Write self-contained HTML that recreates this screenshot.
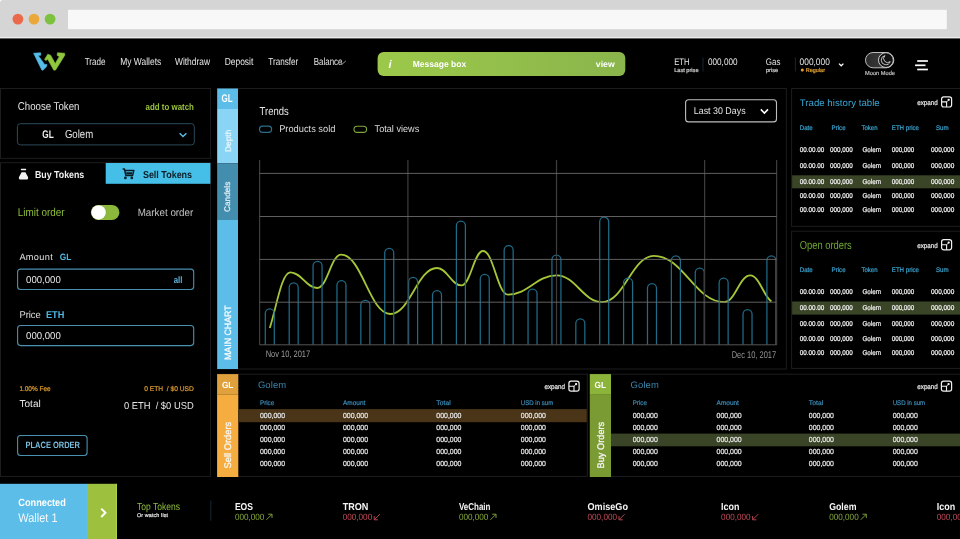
<!DOCTYPE html>
<html><head><meta charset="utf-8"><title>Wallet Dashboard</title>
<style>
html,body{margin:0;padding:0;background:#000;width:960px;height:539px;overflow:hidden}
svg{display:block;position:absolute;left:0;top:0;will-change:transform;text-rendering:geometricPrecision}
svg text{font-family:"Liberation Sans",sans-serif}
</style></head>
<body>
<svg width="960" height="539" viewBox="0 0 960 539">
<rect x="0" y="0" width="960" height="38" fill="#d5d5d5"/>
<path d="M0 0 H3 A3 3 0 0 0 0 3 Z" fill="#fff"/>
<rect x="0.00" y="37.20" width="960.00" height="1.20" rx="0" fill="#f2f2f2" />
<rect x="68.00" y="9.80" width="878.80" height="19.40" rx="0" fill="#f8f8f8" />
<circle cx="17.9" cy="19.1" r="5.4" fill="#e9694a"/>
<circle cx="34" cy="19.1" r="5.4" fill="#eaa83a"/>
<circle cx="50.1" cy="19.1" r="5.4" fill="#7dc23f"/>
<g fill="none" stroke-linejoin="round"><path d="M33.6 53.2 L40.6 52.8 L40.8 55.2 L38.2 55.4 L44.6 64.4 L46.8 64.3 L46.6 66.6 L43 70.2 L41.8 70 Z" fill="#55bde9" stroke="#55bde9" stroke-width="0.6"/><path d="M44.6 59.4 L47.8 54.2 L50.6 55.2 L55.2 63.6 L59.4 56.4 L57.2 55.6 L57.4 52.8 L64.6 53.2 L64.8 55.2 L55.6 70 L53.8 70.2 L47.6 59 L46.2 60.6 Z" fill="#8fc73e" stroke="#8fc73e" stroke-width="0.6"/></g>
<text x="84.70" y="65.40" font-size="10.32" fill="#e8e8e8" textLength="20.80" lengthAdjust="spacingAndGlyphs" text-anchor="start" >Trade</text>
<text x="120.30" y="65.40" font-size="10.32" fill="#e8e8e8" textLength="40.90" lengthAdjust="spacingAndGlyphs" text-anchor="start" >My Wallets</text>
<text x="175.00" y="65.40" font-size="10.32" fill="#e8e8e8" textLength="35.00" lengthAdjust="spacingAndGlyphs" text-anchor="start" >Withdraw</text>
<text x="224.70" y="65.40" font-size="10.32" fill="#e8e8e8" textLength="28.60" lengthAdjust="spacingAndGlyphs" text-anchor="start" >Deposit</text>
<text x="268.30" y="65.40" font-size="10.32" fill="#e8e8e8" textLength="30.00" lengthAdjust="spacingAndGlyphs" text-anchor="start" >Transfer</text>
<text x="313.70" y="65.40" font-size="10.32" fill="#e8e8e8" textLength="28.80" lengthAdjust="spacingAndGlyphs" text-anchor="start" >Balance</text>
<path d="M340.9 63.2 L341.9 64.3 L345.8 61" stroke="#bbb" stroke-width="0.8" fill="none"/>
<defs><linearGradient id="mg" x1="0" x2="1" y1="0" y2="0"><stop offset="0" stop-color="#9cc94a"/><stop offset="1" stop-color="#8ab54c"/></linearGradient></defs>
<rect x="377.60" y="52.00" width="247.70" height="24.00" rx="6" fill="url(#mg)" />
<text x="388.60" y="67.60" font-size="11.00" fill="#fff" font-weight="bold" text-anchor="start" font-style="italic">i</text>
<text x="412.70" y="67.40" font-size="8.72" fill="#fff" font-weight="bold" textLength="53.50" lengthAdjust="spacingAndGlyphs" text-anchor="start" >Message box</text>
<text x="595.80" y="67.40" font-size="8.70" fill="#fff" font-weight="bold" textLength="18.90" lengthAdjust="spacing" text-anchor="start" >view</text>
<text x="674.20" y="64.80" font-size="9.59" fill="#e6e6e6" textLength="15.40" lengthAdjust="spacingAndGlyphs" text-anchor="start" >ETH</text>
<text x="674.20" y="72.00" font-size="5.60" fill="#cfcfcf" textLength="24.30" lengthAdjust="spacing" stroke="#cfcfcf" stroke-width="0.22" text-anchor="start" >Last prise</text>
<line x1="703.00" y1="57.50" x2="703.00" y2="71.50" stroke="#13212a" stroke-width="1.2" />
<text x="708.00" y="64.80" font-size="9.59" fill="#e6e6e6" textLength="29.50" lengthAdjust="spacingAndGlyphs" text-anchor="start" >000,000</text>
<text x="765.80" y="64.80" font-size="9.59" fill="#e6e6e6" textLength="14.60" lengthAdjust="spacingAndGlyphs" text-anchor="start" >Gas</text>
<text x="766.00" y="72.00" font-size="5.60" fill="#cfcfcf" textLength="12.00" lengthAdjust="spacingAndGlyphs" stroke="#cfcfcf" stroke-width="0.22" text-anchor="start" >prise</text>
<line x1="795.40" y1="57.50" x2="795.40" y2="71.50" stroke="#13212a" stroke-width="1.2" />
<text x="799.60" y="64.80" font-size="9.59" fill="#e6e6e6" textLength="30.20" lengthAdjust="spacingAndGlyphs" text-anchor="start" >000,000</text>
<circle cx="802.3" cy="70" r="1.5" fill="#e8a33a"/>
<text x="805.80" y="72.00" font-size="5.60" fill="#e0a030" textLength="19.20" lengthAdjust="spacingAndGlyphs" stroke="#e0a030" stroke-width="0.22" text-anchor="start" >Regular</text>
<path d="M839 63.6 L841.2 65.8 L843.4 63.6" stroke="#fff" stroke-width="1.3" fill="none"/>
<defs><linearGradient id="tg" x1="0" x2="1"><stop offset="0" stop-color="#2a2a2a"/><stop offset="1" stop-color="#444"/></linearGradient></defs>
<rect x="865.50" y="52.50" width="28.30" height="15.30" rx="7.6" fill="url(#tg)" stroke="#bdbdbd" stroke-width="1" />
<circle cx="885.9" cy="60.1" r="7.4" fill="#111" stroke="#cfcfcf" stroke-width="1"/>
<path d="M885 55.6 A4.6 4.6 0 1 0 890.2 61.6 A3.6 3.6 0 0 1 885 55.6 Z" fill="none" stroke="#d0d0d0" stroke-width="0.9"/>
<text x="865.00" y="75.20" font-size="5.80" fill="#bdbdbd" textLength="30.00" lengthAdjust="spacingAndGlyphs" stroke="#bdbdbd" stroke-width="0.22" text-anchor="start" >Moon Mode</text>
<line x1="917.20" y1="61.00" x2="927.90" y2="61.00" stroke="#fff" stroke-width="1.7" />
<line x1="915.10" y1="65.30" x2="925.50" y2="65.30" stroke="#fff" stroke-width="1.7" />
<line x1="917.20" y1="69.50" x2="927.90" y2="69.50" stroke="#fff" stroke-width="1.7" />
<rect x="0.50" y="88.50" width="210.10" height="69.80" rx="0" fill="#000" stroke="#1d1d1d" stroke-width="1" />
<text x="17.80" y="109.60" font-size="11.34" fill="#e2e2e2" textLength="61.60" lengthAdjust="spacingAndGlyphs" text-anchor="start" >Choose Token</text>
<text x="145.60" y="109.60" font-size="9.40" fill="#98c13c" font-weight="bold" textLength="48.30" lengthAdjust="spacingAndGlyphs" text-anchor="start" >add to watch</text>
<rect x="17.40" y="123.70" width="176.90" height="21.20" rx="3" fill="#000" stroke="#2c4a5a" stroke-width="1" />
<text x="42.30" y="137.50" font-size="11.05" fill="#f0f0f0" font-weight="bold" textLength="11.40" lengthAdjust="spacingAndGlyphs" text-anchor="start" >GL</text>
<text x="64.90" y="137.50" font-size="11.63" fill="#e6e6e6" textLength="28.30" lengthAdjust="spacingAndGlyphs" text-anchor="start" >Golem</text>
<path d="M179.6 133.3 L183 136.6 L186.4 133.3" stroke="#5bbde8" stroke-width="1.4" fill="none"/>
<rect x="0.50" y="162.70" width="210.10" height="313.70" rx="0" fill="#000" stroke="#1d1d1d" stroke-width="1" />
<rect x="105.70" y="163.00" width="104.70" height="20.80" rx="0" fill="#45bfe8" />
<rect x="20.8" y="168.8" width="5.4" height="1.4" rx="0.6" fill="#f2f2f2"/><path d="M21.6 172.3 H25.4 L28 177 Q28.6 179.6 26.2 179.6 H20.8 Q18.4 179.6 19 177 Z" fill="#f2f2f2"/>
<text x="34.90" y="177.90" font-size="10.03" fill="#f0f0f0" font-weight="bold" textLength="49.40" lengthAdjust="spacingAndGlyphs" text-anchor="start" >Buy Tokens</text>
<g fill="none" stroke="#0b1c24" stroke-width="1.5" stroke-linejoin="round"><path d="M122.6 168.9 H124.4 L125.8 175.4 H132.6 L133.8 170.6 H125"/></g><path d="M126 172.2 H132.4 L131.8 174.4 H126.5 Z" fill="#0b1c24"/><circle cx="125.4" cy="177.9" r="1.35" fill="#0b1c24"/><circle cx="131.8" cy="177.9" r="1.35" fill="#0b1c24"/>
<text x="142.90" y="177.90" font-size="10.03" fill="#0c1d25" font-weight="bold" textLength="49.20" lengthAdjust="spacingAndGlyphs" text-anchor="start" >Sell Tokens</text>
<text x="17.80" y="216.00" font-size="11.34" fill="#8fbd3c" textLength="46.80" lengthAdjust="spacingAndGlyphs" text-anchor="start" >Limit order</text>
<rect x="90.90" y="204.90" width="28.50" height="15.10" rx="7.5" fill="#8cb83c" />
<circle cx="99.2" cy="212.45" r="7.2" fill="#6f9a2c" opacity="0.6"/><circle cx="98.6" cy="212.45" r="7.25" fill="#fff"/>
<text x="137.70" y="216.00" font-size="10.61" fill="#c2c2c2" textLength="55.60" lengthAdjust="spacingAndGlyphs" text-anchor="start" >Market order</text>
<text x="19.40" y="260.40" font-size="9.16" fill="#e2e2e2" textLength="33.30" lengthAdjust="spacing" text-anchor="start" >Amount</text>
<text x="59.80" y="260.40" font-size="9.16" fill="#4db8e6" font-weight="bold" textLength="11.60" lengthAdjust="spacingAndGlyphs" text-anchor="start" >GL</text>
<rect x="17.60" y="269.10" width="176.10" height="20.40" rx="3" fill="#000" stroke="#4a90b0" stroke-width="1.1" />
<text x="26.10" y="282.80" font-size="10.03" fill="#e8e8e8" textLength="34.70" lengthAdjust="spacingAndGlyphs" text-anchor="start" >000,000</text>
<text x="173.70" y="282.80" font-size="9.40" fill="#5bb6e0" font-weight="bold" textLength="8.70" lengthAdjust="spacingAndGlyphs" text-anchor="start" >all</text>
<text x="19.40" y="318.00" font-size="9.88" fill="#e2e2e2" textLength="21.40" lengthAdjust="spacingAndGlyphs" text-anchor="start" >Price</text>
<text x="45.90" y="318.00" font-size="9.88" fill="#4db8e6" font-weight="bold" textLength="18.40" lengthAdjust="spacingAndGlyphs" text-anchor="start" >ETH</text>
<rect x="17.60" y="325.50" width="176.10" height="20.10" rx="3" fill="#000" stroke="#4a90b0" stroke-width="1.1" />
<text x="26.10" y="338.80" font-size="10.03" fill="#e8e8e8" textLength="34.70" lengthAdjust="spacingAndGlyphs" text-anchor="start" >000,000</text>
<text x="19.40" y="391.40" font-size="6.83" fill="#d8982e" textLength="31.20" lengthAdjust="spacingAndGlyphs" stroke="#d8982e" stroke-width="0.22" text-anchor="start" >1.00% Fee</text>
<text x="144.30" y="391.40" font-size="6.83" fill="#d8982e" textLength="49.40" lengthAdjust="spacingAndGlyphs" stroke="#d8982e" stroke-width="0.22" text-anchor="start" >0 ETH  / $0 USD</text>
<text x="19.40" y="407.10" font-size="10.03" fill="#e6e6e6" textLength="21.40" lengthAdjust="spacing" text-anchor="start" >Total</text>
<text x="123.90" y="408.70" font-size="10.03" fill="#e6e6e6" textLength="69.80" lengthAdjust="spacingAndGlyphs" text-anchor="start" >0 ETH  / $0 USD</text>
<rect x="17.60" y="435.50" width="69.50" height="20.00" rx="3" fill="#000" stroke="#4a90b0" stroke-width="1.1" />
<text x="25.50" y="448.40" font-size="9.16" fill="#78bcdc" font-weight="bold" textLength="54.50" lengthAdjust="spacingAndGlyphs" text-anchor="start" >PLACE ORDER</text>
<rect x="217.50" y="88.50" width="568.80" height="280.50" rx="0" fill="#000" stroke="#1d1d1d" stroke-width="1" />
<rect x="217.20" y="88.50" width="20.80" height="20.50" rx="0" fill="#5bbde8" />
<rect x="217.20" y="109.00" width="20.80" height="54.40" rx="0" fill="#8ad5f5" />
<rect x="217.20" y="163.40" width="20.80" height="56.60" rx="0" fill="#438eae" />
<rect x="217.20" y="220.00" width="20.80" height="149.00" rx="0" fill="#5bbde8" />
<text x="221.60" y="102.00" font-size="11.19" fill="#fff" font-weight="bold" textLength="11.10" lengthAdjust="spacingAndGlyphs" text-anchor="start" >GL</text>
<text x="0" y="0" font-size="8.20" fill="#e8f6fc" stroke="#e8f6fc" stroke-width="0.25" textLength="22.30" lengthAdjust="spacingAndGlyphs" text-anchor="middle" transform="translate(230.62,140.85) rotate(-90)">Depth</text>
<text x="0" y="0" font-size="8.20" fill="#e0eef4" stroke="#e0eef4" stroke-width="0.25" textLength="30.30" lengthAdjust="spacingAndGlyphs" text-anchor="middle" transform="translate(230.32,196.85) rotate(-90)">Candels</text>
<text x="0" y="0" font-size="9.20" fill="#fafdff" stroke="#fafdff" stroke-width="0.25" textLength="54.70" lengthAdjust="spacingAndGlyphs" text-anchor="middle" transform="translate(231.36,332.65) rotate(-90)">MAIN CHART</text>
<text x="259.60" y="114.60" font-size="11.48" fill="#e6e6e6" textLength="29.10" lengthAdjust="spacingAndGlyphs" text-anchor="start" >Trends</text>
<rect x="259.50" y="126.20" width="12.10" height="6.20" rx="3.1" fill="none" stroke="#2b6e8c" stroke-width="1.2" />
<text x="279.20" y="131.90" font-size="9.74" fill="#dcdcdc" textLength="56.20" lengthAdjust="spacingAndGlyphs" text-anchor="start" >Products sold</text>
<rect x="354.00" y="126.20" width="12.60" height="6.20" rx="3.1" fill="none" stroke="#7fa838" stroke-width="1.1" />
<text x="374.60" y="131.90" font-size="9.74" fill="#dcdcdc" textLength="44.60" lengthAdjust="spacingAndGlyphs" text-anchor="start" >Total views</text>
<rect x="685.60" y="99.80" width="90.90" height="22.10" rx="3" fill="#000" stroke="#bdbdbd" stroke-width="1.1" />
<text x="693.80" y="114.30" font-size="9.74" fill="#e6e6e6" textLength="51.80" lengthAdjust="spacingAndGlyphs" text-anchor="start" >Last 30 Days</text>
<path d="M760.8 109.4 L764.4 113 L768 109.4" stroke="#fff" stroke-width="1.6" fill="none"/>
<path d="M269.80 328.10 C276.63 306.23 281.69 272.40 290.30 272.40 C301.64 272.40 305.96 288.00 317.30 288.00 C327.30 288.00 331.10 254.60 341.10 254.60 C361.81 254.60 369.69 314.00 390.40 314.00 C409.97 314.00 417.43 268.00 437.00 268.00 C447.29 268.00 451.21 285.40 461.50 285.40 C470.53 285.40 473.97 251.00 483.00 251.00 C493.50 251.00 497.50 294.70 508.00 294.70 C528.37 294.70 536.13 275.40 556.50 275.40 C575.69 275.40 583.01 302.10 602.20 302.10 C623.87 302.10 632.13 255.80 653.80 255.80 C683.41 255.80 694.69 302.10 724.30 302.10 C735.22 302.10 739.38 275.40 750.30 275.40 C759.16 275.40 764.37 297.88 771.40 301.40 " fill="none" stroke="#a6c63a" stroke-width="1.8"/>
<path d="M265.30 344.8 V313.30 A4.50 4.50 0 0 1 274.30 313.30 V344.8 M289.19 344.8 V287.30 A4.50 4.50 0 0 1 298.19 287.30 V344.8 M313.07 344.8 V265.80 A4.50 4.50 0 0 1 322.07 265.80 V344.8 M336.96 344.8 V285.10 A4.50 4.50 0 0 1 345.96 285.10 V344.8 M360.84 344.8 V304.80 A4.50 4.50 0 0 1 369.84 304.80 V344.8 M384.73 344.8 V252.80 A4.50 4.50 0 0 1 393.73 252.80 V344.8 M408.62 344.8 V281.80 A4.50 4.50 0 0 1 417.62 281.80 V344.8 M432.50 344.8 V295.00 A4.50 4.50 0 0 1 441.50 295.00 V344.8 M456.39 344.8 V225.70 A4.50 4.50 0 0 1 465.39 225.70 V344.8 M480.27 344.8 V278.80 A4.50 4.50 0 0 1 489.27 278.80 V344.8 M504.16 344.8 V250.20 A4.50 4.50 0 0 1 513.16 250.20 V344.8 M528.05 344.8 V293.60 A4.50 4.50 0 0 1 537.05 293.60 V344.8 M551.93 344.8 V259.50 A4.50 4.50 0 0 1 560.93 259.50 V344.8 M575.82 344.8 V323.30 A4.50 4.50 0 0 1 584.82 323.30 V344.8 M599.70 344.8 V221.70 A4.50 4.50 0 0 1 608.70 221.70 V344.8 M623.59 344.8 V282.50 A4.50 4.50 0 0 1 632.59 282.50 V344.8 M647.48 344.8 V288.10 A4.50 4.50 0 0 1 656.48 288.10 V344.8 M671.36 344.8 V260.30 A4.50 4.50 0 0 1 680.36 260.30 V344.8 M695.25 344.8 V272.50 A4.50 4.50 0 0 1 704.25 272.50 V344.8 M719.13 344.8 V282.50 A4.50 4.50 0 0 1 728.13 282.50 V344.8 M743.02 344.8 V314.10 A4.50 4.50 0 0 1 752.02 314.10 V344.8 M766.91 344.8 V260.30 A4.50 4.50 0 0 1 775.91 260.30 V344.8 " fill="none" stroke="#1f6b88" stroke-width="1.25"/>
<line x1="259.60" y1="160.00" x2="259.60" y2="344.80" stroke="#3e3e3e" stroke-width="1.2" />
<line x1="407.90" y1="160.00" x2="407.90" y2="344.80" stroke="#3e3e3e" stroke-width="1.2" />
<line x1="556.50" y1="160.00" x2="556.50" y2="344.80" stroke="#3e3e3e" stroke-width="1.2" />
<line x1="704.60" y1="160.00" x2="704.60" y2="344.80" stroke="#3e3e3e" stroke-width="1.2" />
<line x1="776.60" y1="160.00" x2="776.60" y2="344.80" stroke="#3e3e3e" stroke-width="1.2" />
<line x1="259.60" y1="173.40" x2="776.60" y2="173.40" stroke="#6a6a6a" stroke-width="0.9" />
<line x1="259.60" y1="216.50" x2="776.60" y2="216.50" stroke="#6a6a6a" stroke-width="0.9" />
<line x1="259.60" y1="259.40" x2="776.60" y2="259.40" stroke="#6a6a6a" stroke-width="0.9" />
<line x1="259.60" y1="302.20" x2="776.60" y2="302.20" stroke="#6a6a6a" stroke-width="0.9" />
<line x1="259.60" y1="344.80" x2="776.60" y2="344.80" stroke="#555" stroke-width="1" />
<text x="265.70" y="357.40" font-size="9.30" fill="#9a9a9a" textLength="44.50" lengthAdjust="spacingAndGlyphs" text-anchor="start" >Nov 10, 2017</text>
<text x="731.70" y="358.20" font-size="9.74" fill="#949494" textLength="44.40" lengthAdjust="spacingAndGlyphs" text-anchor="start" >Dec 10, 2017</text>
<rect x="791.60" y="88.50" width="170.40" height="137.80" rx="0" fill="#000" stroke="#1d1d1d" stroke-width="1" />
<rect x="792.10" y="175.30" width="167.90" height="13.00" rx="0" fill="#3a4426" />
<text x="799.70" y="105.80" font-size="9.59" fill="#3aa6d4" textLength="80.00" lengthAdjust="spacing" text-anchor="start" >Trade history table</text>
<text x="917.20" y="105.00" font-size="7.00" fill="#e6e6e6" textLength="20.50" lengthAdjust="spacingAndGlyphs" stroke="#e6e6e6" stroke-width="0.22" text-anchor="start" >expand</text>
<g fill="none" stroke="#f0f0f0"><rect x="941.60" y="96.80" width="10.00" height="10.20" rx="2.2" stroke-width="1.2"/><path d="M941.60 101.90 H946.60 V107.00" stroke-width="1.1"/><path d="M946.60 101.90 L948.60 100.00" stroke-width="0.8"/></g><circle cx="948.70" cy="99.80" r="1.15" fill="#fff"/>
<text x="799.70" y="129.60" font-size="6.69" fill="#3aa0cc" textLength="13.00" lengthAdjust="spacingAndGlyphs" stroke="#3aa0cc" stroke-width="0.22" text-anchor="start" >Date</text>
<text x="831.60" y="129.60" font-size="6.69" fill="#3aa0cc" textLength="14.00" lengthAdjust="spacingAndGlyphs" stroke="#3aa0cc" stroke-width="0.22" text-anchor="start" >Price</text>
<text x="861.40" y="129.60" font-size="6.69" fill="#3aa0cc" textLength="16.10" lengthAdjust="spacingAndGlyphs" stroke="#3aa0cc" stroke-width="0.22" text-anchor="start" >Token</text>
<text x="891.80" y="129.60" font-size="6.69" fill="#3aa0cc" textLength="27.20" lengthAdjust="spacingAndGlyphs" stroke="#3aa0cc" stroke-width="0.22" text-anchor="start" >ETH price</text>
<text x="936.00" y="129.60" font-size="6.69" fill="#3aa0cc" textLength="12.60" lengthAdjust="spacingAndGlyphs" stroke="#3aa0cc" stroke-width="0.22" text-anchor="start" >Sum</text>
<text x="799.70" y="151.70" font-size="6.98" fill="#f0f0f0" textLength="24.60" lengthAdjust="spacingAndGlyphs" stroke="#f0f0f0" stroke-width="0.22" text-anchor="start" >00.00.00</text>
<text x="829.90" y="151.70" font-size="6.98" fill="#f0f0f0" textLength="22.80" lengthAdjust="spacingAndGlyphs" stroke="#f0f0f0" stroke-width="0.22" text-anchor="start" >000,000</text>
<text x="862.40" y="151.70" font-size="6.98" fill="#f0f0f0" textLength="18.60" lengthAdjust="spacingAndGlyphs" stroke="#f0f0f0" stroke-width="0.22" text-anchor="start" >Golem</text>
<text x="891.70" y="151.70" font-size="6.98" fill="#f0f0f0" textLength="22.60" lengthAdjust="spacingAndGlyphs" stroke="#f0f0f0" stroke-width="0.22" text-anchor="start" >000,000</text>
<text x="931.00" y="151.70" font-size="6.98" fill="#f0f0f0" textLength="23.30" lengthAdjust="spacingAndGlyphs" stroke="#f0f0f0" stroke-width="0.22" text-anchor="start" >000,000</text>
<text x="799.70" y="167.80" font-size="6.98" fill="#f0f0f0" textLength="24.60" lengthAdjust="spacingAndGlyphs" stroke="#f0f0f0" stroke-width="0.22" text-anchor="start" >00.00.00</text>
<text x="829.90" y="167.80" font-size="6.98" fill="#f0f0f0" textLength="22.80" lengthAdjust="spacingAndGlyphs" stroke="#f0f0f0" stroke-width="0.22" text-anchor="start" >000,000</text>
<text x="862.40" y="167.80" font-size="6.98" fill="#f0f0f0" textLength="18.60" lengthAdjust="spacingAndGlyphs" stroke="#f0f0f0" stroke-width="0.22" text-anchor="start" >Golem</text>
<text x="891.70" y="167.80" font-size="6.98" fill="#f0f0f0" textLength="22.60" lengthAdjust="spacingAndGlyphs" stroke="#f0f0f0" stroke-width="0.22" text-anchor="start" >000,000</text>
<text x="931.00" y="167.80" font-size="6.98" fill="#f0f0f0" textLength="23.30" lengthAdjust="spacingAndGlyphs" stroke="#f0f0f0" stroke-width="0.22" text-anchor="start" >000,000</text>
<text x="799.70" y="183.60" font-size="6.98" fill="#f0f0f0" textLength="24.60" lengthAdjust="spacingAndGlyphs" stroke="#f0f0f0" stroke-width="0.22" text-anchor="start" >00.00.00</text>
<text x="829.90" y="183.60" font-size="6.98" fill="#f0f0f0" textLength="22.80" lengthAdjust="spacingAndGlyphs" stroke="#f0f0f0" stroke-width="0.22" text-anchor="start" >000,000</text>
<text x="862.40" y="183.60" font-size="6.98" fill="#f0f0f0" textLength="18.60" lengthAdjust="spacingAndGlyphs" stroke="#f0f0f0" stroke-width="0.22" text-anchor="start" >Golem</text>
<text x="891.70" y="183.60" font-size="6.98" fill="#f0f0f0" textLength="22.60" lengthAdjust="spacingAndGlyphs" stroke="#f0f0f0" stroke-width="0.22" text-anchor="start" >000,000</text>
<text x="931.00" y="183.60" font-size="6.98" fill="#f0f0f0" textLength="23.30" lengthAdjust="spacingAndGlyphs" stroke="#f0f0f0" stroke-width="0.22" text-anchor="start" >000,000</text>
<text x="799.70" y="198.10" font-size="6.98" fill="#f0f0f0" textLength="24.60" lengthAdjust="spacingAndGlyphs" stroke="#f0f0f0" stroke-width="0.22" text-anchor="start" >00.00.00</text>
<text x="829.90" y="198.10" font-size="6.98" fill="#f0f0f0" textLength="22.80" lengthAdjust="spacingAndGlyphs" stroke="#f0f0f0" stroke-width="0.22" text-anchor="start" >000,000</text>
<text x="862.40" y="198.10" font-size="6.98" fill="#f0f0f0" textLength="18.60" lengthAdjust="spacingAndGlyphs" stroke="#f0f0f0" stroke-width="0.22" text-anchor="start" >Golem</text>
<text x="891.70" y="198.10" font-size="6.98" fill="#f0f0f0" textLength="22.60" lengthAdjust="spacingAndGlyphs" stroke="#f0f0f0" stroke-width="0.22" text-anchor="start" >000,000</text>
<text x="931.00" y="198.10" font-size="6.98" fill="#f0f0f0" textLength="23.30" lengthAdjust="spacingAndGlyphs" stroke="#f0f0f0" stroke-width="0.22" text-anchor="start" >000,000</text>
<text x="799.70" y="212.00" font-size="6.98" fill="#f0f0f0" textLength="24.60" lengthAdjust="spacingAndGlyphs" stroke="#f0f0f0" stroke-width="0.22" text-anchor="start" >00.00.00</text>
<text x="829.90" y="212.00" font-size="6.98" fill="#f0f0f0" textLength="22.80" lengthAdjust="spacingAndGlyphs" stroke="#f0f0f0" stroke-width="0.22" text-anchor="start" >000,000</text>
<text x="862.40" y="212.00" font-size="6.98" fill="#f0f0f0" textLength="18.60" lengthAdjust="spacingAndGlyphs" stroke="#f0f0f0" stroke-width="0.22" text-anchor="start" >Golem</text>
<text x="891.70" y="212.00" font-size="6.98" fill="#f0f0f0" textLength="22.60" lengthAdjust="spacingAndGlyphs" stroke="#f0f0f0" stroke-width="0.22" text-anchor="start" >000,000</text>
<text x="931.00" y="212.00" font-size="6.98" fill="#f0f0f0" textLength="23.30" lengthAdjust="spacingAndGlyphs" stroke="#f0f0f0" stroke-width="0.22" text-anchor="start" >000,000</text>
<rect x="791.60" y="231.20" width="170.40" height="137.20" rx="0" fill="#000" stroke="#1d1d1d" stroke-width="1" />
<rect x="792.10" y="301.50" width="167.90" height="13.10" rx="0" fill="#3a4426" />
<text x="799.70" y="248.70" font-size="11.63" fill="#6fa534" textLength="52.10" lengthAdjust="spacingAndGlyphs" text-anchor="start" >Open orders</text>
<text x="917.20" y="247.80" font-size="7.00" fill="#e6e6e6" textLength="20.50" lengthAdjust="spacingAndGlyphs" stroke="#e6e6e6" stroke-width="0.22" text-anchor="start" >expand</text>
<g fill="none" stroke="#f0f0f0"><rect x="941.60" y="239.60" width="10.00" height="10.20" rx="2.2" stroke-width="1.2"/><path d="M941.60 244.70 H946.60 V249.80" stroke-width="1.1"/><path d="M946.60 244.70 L948.60 242.80" stroke-width="0.8"/></g><circle cx="948.70" cy="242.60" r="1.15" fill="#fff"/>
<text x="799.70" y="272.30" font-size="6.69" fill="#3aa0cc" textLength="13.00" lengthAdjust="spacingAndGlyphs" stroke="#3aa0cc" stroke-width="0.22" text-anchor="start" >Date</text>
<text x="831.60" y="272.30" font-size="6.69" fill="#3aa0cc" textLength="14.00" lengthAdjust="spacingAndGlyphs" stroke="#3aa0cc" stroke-width="0.22" text-anchor="start" >Price</text>
<text x="861.40" y="272.30" font-size="6.69" fill="#3aa0cc" textLength="16.10" lengthAdjust="spacingAndGlyphs" stroke="#3aa0cc" stroke-width="0.22" text-anchor="start" >Token</text>
<text x="891.80" y="272.30" font-size="6.69" fill="#3aa0cc" textLength="27.20" lengthAdjust="spacingAndGlyphs" stroke="#3aa0cc" stroke-width="0.22" text-anchor="start" >ETH price</text>
<text x="936.00" y="272.30" font-size="6.69" fill="#3aa0cc" textLength="12.60" lengthAdjust="spacingAndGlyphs" stroke="#3aa0cc" stroke-width="0.22" text-anchor="start" >Sum</text>
<text x="799.70" y="294.20" font-size="6.98" fill="#f0f0f0" textLength="24.60" lengthAdjust="spacingAndGlyphs" stroke="#f0f0f0" stroke-width="0.22" text-anchor="start" >00.00.00</text>
<text x="829.90" y="294.20" font-size="6.98" fill="#f0f0f0" textLength="22.80" lengthAdjust="spacingAndGlyphs" stroke="#f0f0f0" stroke-width="0.22" text-anchor="start" >000,000</text>
<text x="862.40" y="294.20" font-size="6.98" fill="#f0f0f0" textLength="18.60" lengthAdjust="spacingAndGlyphs" stroke="#f0f0f0" stroke-width="0.22" text-anchor="start" >Golem</text>
<text x="891.70" y="294.20" font-size="6.98" fill="#f0f0f0" textLength="22.60" lengthAdjust="spacingAndGlyphs" stroke="#f0f0f0" stroke-width="0.22" text-anchor="start" >000,000</text>
<text x="931.00" y="294.20" font-size="6.98" fill="#f0f0f0" textLength="23.30" lengthAdjust="spacingAndGlyphs" stroke="#f0f0f0" stroke-width="0.22" text-anchor="start" >000,000</text>
<text x="799.70" y="310.30" font-size="6.98" fill="#f0f0f0" textLength="24.60" lengthAdjust="spacingAndGlyphs" stroke="#f0f0f0" stroke-width="0.22" text-anchor="start" >00.00.00</text>
<text x="829.90" y="310.30" font-size="6.98" fill="#f0f0f0" textLength="22.80" lengthAdjust="spacingAndGlyphs" stroke="#f0f0f0" stroke-width="0.22" text-anchor="start" >000,000</text>
<text x="862.40" y="310.30" font-size="6.98" fill="#f0f0f0" textLength="18.60" lengthAdjust="spacingAndGlyphs" stroke="#f0f0f0" stroke-width="0.22" text-anchor="start" >Golem</text>
<text x="891.70" y="310.30" font-size="6.98" fill="#f0f0f0" textLength="22.60" lengthAdjust="spacingAndGlyphs" stroke="#f0f0f0" stroke-width="0.22" text-anchor="start" >000,000</text>
<text x="931.00" y="310.30" font-size="6.98" fill="#f0f0f0" textLength="23.30" lengthAdjust="spacingAndGlyphs" stroke="#f0f0f0" stroke-width="0.22" text-anchor="start" >000,000</text>
<text x="799.70" y="326.20" font-size="6.98" fill="#f0f0f0" textLength="24.60" lengthAdjust="spacingAndGlyphs" stroke="#f0f0f0" stroke-width="0.22" text-anchor="start" >00.00.00</text>
<text x="829.90" y="326.20" font-size="6.98" fill="#f0f0f0" textLength="22.80" lengthAdjust="spacingAndGlyphs" stroke="#f0f0f0" stroke-width="0.22" text-anchor="start" >000,000</text>
<text x="862.40" y="326.20" font-size="6.98" fill="#f0f0f0" textLength="18.60" lengthAdjust="spacingAndGlyphs" stroke="#f0f0f0" stroke-width="0.22" text-anchor="start" >Golem</text>
<text x="891.70" y="326.20" font-size="6.98" fill="#f0f0f0" textLength="22.60" lengthAdjust="spacingAndGlyphs" stroke="#f0f0f0" stroke-width="0.22" text-anchor="start" >000,000</text>
<text x="931.00" y="326.20" font-size="6.98" fill="#f0f0f0" textLength="23.30" lengthAdjust="spacingAndGlyphs" stroke="#f0f0f0" stroke-width="0.22" text-anchor="start" >000,000</text>
<text x="799.70" y="340.60" font-size="6.98" fill="#f0f0f0" textLength="24.60" lengthAdjust="spacingAndGlyphs" stroke="#f0f0f0" stroke-width="0.22" text-anchor="start" >00.00.00</text>
<text x="829.90" y="340.60" font-size="6.98" fill="#f0f0f0" textLength="22.80" lengthAdjust="spacingAndGlyphs" stroke="#f0f0f0" stroke-width="0.22" text-anchor="start" >000,000</text>
<text x="862.40" y="340.60" font-size="6.98" fill="#f0f0f0" textLength="18.60" lengthAdjust="spacingAndGlyphs" stroke="#f0f0f0" stroke-width="0.22" text-anchor="start" >Golem</text>
<text x="891.70" y="340.60" font-size="6.98" fill="#f0f0f0" textLength="22.60" lengthAdjust="spacingAndGlyphs" stroke="#f0f0f0" stroke-width="0.22" text-anchor="start" >000,000</text>
<text x="931.00" y="340.60" font-size="6.98" fill="#f0f0f0" textLength="23.30" lengthAdjust="spacingAndGlyphs" stroke="#f0f0f0" stroke-width="0.22" text-anchor="start" >000,000</text>
<text x="799.70" y="354.60" font-size="6.98" fill="#f0f0f0" textLength="24.60" lengthAdjust="spacingAndGlyphs" stroke="#f0f0f0" stroke-width="0.22" text-anchor="start" >00.00.00</text>
<text x="829.90" y="354.60" font-size="6.98" fill="#f0f0f0" textLength="22.80" lengthAdjust="spacingAndGlyphs" stroke="#f0f0f0" stroke-width="0.22" text-anchor="start" >000,000</text>
<text x="862.40" y="354.60" font-size="6.98" fill="#f0f0f0" textLength="18.60" lengthAdjust="spacingAndGlyphs" stroke="#f0f0f0" stroke-width="0.22" text-anchor="start" >Golem</text>
<text x="891.70" y="354.60" font-size="6.98" fill="#f0f0f0" textLength="22.60" lengthAdjust="spacingAndGlyphs" stroke="#f0f0f0" stroke-width="0.22" text-anchor="start" >000,000</text>
<text x="931.00" y="354.60" font-size="6.98" fill="#f0f0f0" textLength="23.30" lengthAdjust="spacingAndGlyphs" stroke="#f0f0f0" stroke-width="0.22" text-anchor="start" >000,000</text>
<rect x="217.60" y="374.20" width="369.70" height="102.20" rx="0" fill="#000" stroke="#1d1d1d" stroke-width="1" />
<rect x="217.10" y="374.10" width="21.20" height="20.70" rx="0" fill="#e0a03c" />
<rect x="217.10" y="394.80" width="21.20" height="82.20" rx="0" fill="#f5ad3f" />
<text x="221.90" y="388.10" font-size="8.87" fill="#fff" font-weight="bold" textLength="11.50" lengthAdjust="spacingAndGlyphs" text-anchor="start" >GL</text>
<text x="0" y="0" font-size="9.60" fill="#f8f8f8" stroke="#f8f8f8" stroke-width="0.25" textLength="46.60" lengthAdjust="spacingAndGlyphs" text-anchor="middle" transform="translate(231.20,445.10) rotate(-90)">Sell Orders</text>
<rect x="238.30" y="409.10" width="348.50" height="13.10" rx="0" fill="#4a3519" />
<text x="257.90" y="388.20" font-size="9.45" fill="#3a86ac" textLength="28.20" lengthAdjust="spacing" text-anchor="start" >Golem</text>
<text x="544.50" y="388.80" font-size="7.00" fill="#e6e6e6" textLength="20.50" lengthAdjust="spacingAndGlyphs" stroke="#e6e6e6" stroke-width="0.22" text-anchor="start" >expand</text>
<g fill="none" stroke="#f0f0f0"><rect x="568.90" y="381.20" width="10.20" height="10.00" rx="2.2" stroke-width="1.2"/><path d="M568.90 386.20 H574.00 V391.20" stroke-width="1.1"/><path d="M574.00 386.20 L576.00 384.30" stroke-width="0.8"/></g><circle cx="576.10" cy="384.10" r="1.15" fill="#fff"/>
<text x="260.00" y="405.20" font-size="6.69" fill="#3a88b2" textLength="14.20" lengthAdjust="spacingAndGlyphs" stroke="#3a88b2" stroke-width="0.22" text-anchor="start" >Price</text>
<text x="260.00" y="418.30" font-size="7.27" fill="#e4e4e4" textLength="25.10" lengthAdjust="spacingAndGlyphs" stroke="#e4e4e4" stroke-width="0.22" text-anchor="start" >000,000</text>
<text x="260.00" y="430.30" font-size="7.27" fill="#e4e4e4" textLength="25.10" lengthAdjust="spacingAndGlyphs" stroke="#e4e4e4" stroke-width="0.22" text-anchor="start" >000,000</text>
<text x="260.00" y="442.10" font-size="7.27" fill="#e4e4e4" textLength="25.10" lengthAdjust="spacingAndGlyphs" stroke="#e4e4e4" stroke-width="0.22" text-anchor="start" >000,000</text>
<text x="260.00" y="453.90" font-size="7.27" fill="#e4e4e4" textLength="25.10" lengthAdjust="spacingAndGlyphs" stroke="#e4e4e4" stroke-width="0.22" text-anchor="start" >000,000</text>
<text x="260.00" y="465.90" font-size="7.27" fill="#e4e4e4" textLength="25.10" lengthAdjust="spacingAndGlyphs" stroke="#e4e4e4" stroke-width="0.22" text-anchor="start" >000,000</text>
<text x="343.00" y="405.20" font-size="6.69" fill="#3a88b2" textLength="22.30" lengthAdjust="spacingAndGlyphs" stroke="#3a88b2" stroke-width="0.22" text-anchor="start" >Amount</text>
<text x="343.00" y="418.30" font-size="7.27" fill="#e4e4e4" textLength="25.10" lengthAdjust="spacingAndGlyphs" stroke="#e4e4e4" stroke-width="0.22" text-anchor="start" >000,000</text>
<text x="343.00" y="430.30" font-size="7.27" fill="#e4e4e4" textLength="25.10" lengthAdjust="spacingAndGlyphs" stroke="#e4e4e4" stroke-width="0.22" text-anchor="start" >000,000</text>
<text x="343.00" y="442.10" font-size="7.27" fill="#e4e4e4" textLength="25.10" lengthAdjust="spacingAndGlyphs" stroke="#e4e4e4" stroke-width="0.22" text-anchor="start" >000,000</text>
<text x="343.00" y="453.90" font-size="7.27" fill="#e4e4e4" textLength="25.10" lengthAdjust="spacingAndGlyphs" stroke="#e4e4e4" stroke-width="0.22" text-anchor="start" >000,000</text>
<text x="343.00" y="465.90" font-size="7.27" fill="#e4e4e4" textLength="25.10" lengthAdjust="spacingAndGlyphs" stroke="#e4e4e4" stroke-width="0.22" text-anchor="start" >000,000</text>
<text x="436.30" y="405.20" font-size="6.69" fill="#3a88b2" textLength="14.40" lengthAdjust="spacing" stroke="#3a88b2" stroke-width="0.22" text-anchor="start" >Total</text>
<text x="436.30" y="418.30" font-size="7.27" fill="#e4e4e4" textLength="25.10" lengthAdjust="spacingAndGlyphs" stroke="#e4e4e4" stroke-width="0.22" text-anchor="start" >000,000</text>
<text x="436.30" y="430.30" font-size="7.27" fill="#e4e4e4" textLength="25.10" lengthAdjust="spacingAndGlyphs" stroke="#e4e4e4" stroke-width="0.22" text-anchor="start" >000,000</text>
<text x="436.30" y="442.10" font-size="7.27" fill="#e4e4e4" textLength="25.10" lengthAdjust="spacingAndGlyphs" stroke="#e4e4e4" stroke-width="0.22" text-anchor="start" >000,000</text>
<text x="436.30" y="453.90" font-size="7.27" fill="#e4e4e4" textLength="25.10" lengthAdjust="spacingAndGlyphs" stroke="#e4e4e4" stroke-width="0.22" text-anchor="start" >000,000</text>
<text x="436.30" y="465.90" font-size="7.27" fill="#e4e4e4" textLength="25.10" lengthAdjust="spacingAndGlyphs" stroke="#e4e4e4" stroke-width="0.22" text-anchor="start" >000,000</text>
<text x="520.80" y="405.20" font-size="6.69" fill="#3a88b2" textLength="32.50" lengthAdjust="spacingAndGlyphs" stroke="#3a88b2" stroke-width="0.22" text-anchor="start" >USD in sum</text>
<text x="520.80" y="418.30" font-size="7.27" fill="#e4e4e4" textLength="25.10" lengthAdjust="spacingAndGlyphs" stroke="#e4e4e4" stroke-width="0.22" text-anchor="start" >000,000</text>
<text x="520.80" y="430.30" font-size="7.27" fill="#e4e4e4" textLength="25.10" lengthAdjust="spacingAndGlyphs" stroke="#e4e4e4" stroke-width="0.22" text-anchor="start" >000,000</text>
<text x="520.80" y="442.10" font-size="7.27" fill="#e4e4e4" textLength="25.10" lengthAdjust="spacingAndGlyphs" stroke="#e4e4e4" stroke-width="0.22" text-anchor="start" >000,000</text>
<text x="520.80" y="453.90" font-size="7.27" fill="#e4e4e4" textLength="25.10" lengthAdjust="spacingAndGlyphs" stroke="#e4e4e4" stroke-width="0.22" text-anchor="start" >000,000</text>
<text x="520.80" y="465.90" font-size="7.27" fill="#e4e4e4" textLength="25.10" lengthAdjust="spacingAndGlyphs" stroke="#e4e4e4" stroke-width="0.22" text-anchor="start" >000,000</text>
<rect x="590.30" y="374.20" width="371.70" height="102.20" rx="0" fill="#000" stroke="#1d1d1d" stroke-width="1" />
<rect x="589.80" y="374.10" width="21.20" height="20.70" rx="0" fill="#8db43a" />
<rect x="589.80" y="394.80" width="21.20" height="82.20" rx="0" fill="#7a9a34" />
<text x="594.60" y="388.10" font-size="8.87" fill="#fff" font-weight="bold" textLength="11.50" lengthAdjust="spacingAndGlyphs" text-anchor="start" >GL</text>
<text x="0" y="0" font-size="9.60" fill="#f8f8f8" stroke="#f8f8f8" stroke-width="0.25" textLength="46.60" lengthAdjust="spacingAndGlyphs" text-anchor="middle" transform="translate(603.90,445.10) rotate(-90)">Buy Orders</text>
<rect x="611.00" y="433.60" width="350.50" height="12.70" rx="0" fill="#3a4426" />
<text x="630.60" y="388.20" font-size="9.45" fill="#3a86ac" textLength="28.20" lengthAdjust="spacing" text-anchor="start" >Golem</text>
<text x="917.30" y="388.80" font-size="7.00" fill="#e6e6e6" textLength="20.50" lengthAdjust="spacingAndGlyphs" stroke="#e6e6e6" stroke-width="0.22" text-anchor="start" >expand</text>
<g fill="none" stroke="#f0f0f0"><rect x="941.40" y="381.20" width="10.20" height="10.00" rx="2.2" stroke-width="1.2"/><path d="M941.40 386.20 H946.50 V391.20" stroke-width="1.1"/><path d="M946.50 386.20 L948.50 384.30" stroke-width="0.8"/></g><circle cx="948.60" cy="384.10" r="1.15" fill="#fff"/>
<text x="632.70" y="405.20" font-size="6.69" fill="#3a88b2" textLength="14.20" lengthAdjust="spacingAndGlyphs" stroke="#3a88b2" stroke-width="0.22" text-anchor="start" >Price</text>
<text x="632.70" y="418.30" font-size="7.27" fill="#e4e4e4" textLength="25.10" lengthAdjust="spacingAndGlyphs" stroke="#e4e4e4" stroke-width="0.22" text-anchor="start" >000,000</text>
<text x="632.70" y="430.30" font-size="7.27" fill="#e4e4e4" textLength="25.10" lengthAdjust="spacingAndGlyphs" stroke="#e4e4e4" stroke-width="0.22" text-anchor="start" >000,000</text>
<text x="632.70" y="442.10" font-size="7.27" fill="#e4e4e4" textLength="25.10" lengthAdjust="spacingAndGlyphs" stroke="#e4e4e4" stroke-width="0.22" text-anchor="start" >000,000</text>
<text x="632.70" y="453.90" font-size="7.27" fill="#e4e4e4" textLength="25.10" lengthAdjust="spacingAndGlyphs" stroke="#e4e4e4" stroke-width="0.22" text-anchor="start" >000,000</text>
<text x="632.70" y="465.90" font-size="7.27" fill="#e4e4e4" textLength="25.10" lengthAdjust="spacingAndGlyphs" stroke="#e4e4e4" stroke-width="0.22" text-anchor="start" >000,000</text>
<text x="716.60" y="405.20" font-size="6.69" fill="#3a88b2" textLength="22.30" lengthAdjust="spacingAndGlyphs" stroke="#3a88b2" stroke-width="0.22" text-anchor="start" >Amount</text>
<text x="716.60" y="418.30" font-size="7.27" fill="#e4e4e4" textLength="25.10" lengthAdjust="spacingAndGlyphs" stroke="#e4e4e4" stroke-width="0.22" text-anchor="start" >000,000</text>
<text x="716.60" y="430.30" font-size="7.27" fill="#e4e4e4" textLength="25.10" lengthAdjust="spacingAndGlyphs" stroke="#e4e4e4" stroke-width="0.22" text-anchor="start" >000,000</text>
<text x="716.60" y="442.10" font-size="7.27" fill="#e4e4e4" textLength="25.10" lengthAdjust="spacingAndGlyphs" stroke="#e4e4e4" stroke-width="0.22" text-anchor="start" >000,000</text>
<text x="716.60" y="453.90" font-size="7.27" fill="#e4e4e4" textLength="25.10" lengthAdjust="spacingAndGlyphs" stroke="#e4e4e4" stroke-width="0.22" text-anchor="start" >000,000</text>
<text x="716.60" y="465.90" font-size="7.27" fill="#e4e4e4" textLength="25.10" lengthAdjust="spacingAndGlyphs" stroke="#e4e4e4" stroke-width="0.22" text-anchor="start" >000,000</text>
<text x="808.80" y="405.20" font-size="6.69" fill="#3a88b2" textLength="14.40" lengthAdjust="spacing" stroke="#3a88b2" stroke-width="0.22" text-anchor="start" >Total</text>
<text x="808.80" y="418.30" font-size="7.27" fill="#e4e4e4" textLength="25.10" lengthAdjust="spacingAndGlyphs" stroke="#e4e4e4" stroke-width="0.22" text-anchor="start" >000,000</text>
<text x="808.80" y="430.30" font-size="7.27" fill="#e4e4e4" textLength="25.10" lengthAdjust="spacingAndGlyphs" stroke="#e4e4e4" stroke-width="0.22" text-anchor="start" >000,000</text>
<text x="808.80" y="442.10" font-size="7.27" fill="#e4e4e4" textLength="25.10" lengthAdjust="spacingAndGlyphs" stroke="#e4e4e4" stroke-width="0.22" text-anchor="start" >000,000</text>
<text x="808.80" y="453.90" font-size="7.27" fill="#e4e4e4" textLength="25.10" lengthAdjust="spacingAndGlyphs" stroke="#e4e4e4" stroke-width="0.22" text-anchor="start" >000,000</text>
<text x="808.80" y="465.90" font-size="7.27" fill="#e4e4e4" textLength="25.10" lengthAdjust="spacingAndGlyphs" stroke="#e4e4e4" stroke-width="0.22" text-anchor="start" >000,000</text>
<text x="892.70" y="405.20" font-size="6.69" fill="#3a88b2" textLength="32.50" lengthAdjust="spacingAndGlyphs" stroke="#3a88b2" stroke-width="0.22" text-anchor="start" >USD in sum</text>
<text x="892.70" y="418.30" font-size="7.27" fill="#e4e4e4" textLength="25.10" lengthAdjust="spacingAndGlyphs" stroke="#e4e4e4" stroke-width="0.22" text-anchor="start" >000,000</text>
<text x="892.70" y="430.30" font-size="7.27" fill="#e4e4e4" textLength="25.10" lengthAdjust="spacingAndGlyphs" stroke="#e4e4e4" stroke-width="0.22" text-anchor="start" >000,000</text>
<text x="892.70" y="442.10" font-size="7.27" fill="#e4e4e4" textLength="25.10" lengthAdjust="spacingAndGlyphs" stroke="#e4e4e4" stroke-width="0.22" text-anchor="start" >000,000</text>
<text x="892.70" y="453.90" font-size="7.27" fill="#e4e4e4" textLength="25.10" lengthAdjust="spacingAndGlyphs" stroke="#e4e4e4" stroke-width="0.22" text-anchor="start" >000,000</text>
<text x="892.70" y="465.90" font-size="7.27" fill="#e4e4e4" textLength="25.10" lengthAdjust="spacingAndGlyphs" stroke="#e4e4e4" stroke-width="0.22" text-anchor="start" >000,000</text>
<rect x="0.00" y="483.80" width="87.00" height="55.20" rx="0" fill="#5bbde8" />
<rect x="87.00" y="483.80" width="29.80" height="55.20" rx="0" fill="#9dc03f" />
<rect x="115.90" y="483.80" width="1.00" height="55.20" rx="0" fill="#b0d84a" />
<text x="18.30" y="506.20" font-size="10.47" fill="#fff" font-weight="bold" textLength="47.50" lengthAdjust="spacingAndGlyphs" text-anchor="start" >Connected</text>
<text x="18.30" y="521.80" font-size="12.50" fill="#f4f8fb" textLength="39.20" lengthAdjust="spacingAndGlyphs" text-anchor="start" >Wallet 1</text>
<path d="M101.2 508.6 L105.4 512.8 L101.2 517" stroke="#fff" stroke-width="2" fill="none"/>
<text x="137.00" y="509.80" font-size="10.32" fill="#8fbd3c" textLength="43.00" lengthAdjust="spacingAndGlyphs" text-anchor="start" >Top Tokens</text>
<text x="137.00" y="517.20" font-size="5.40" fill="#e0e0e0" textLength="31.00" lengthAdjust="spacing" stroke="#e0e0e0" stroke-width="0.22" text-anchor="start" >Or watch list</text>
<line x1="210.80" y1="500.50" x2="210.80" y2="520.80" stroke="#11202a" stroke-width="1.2" />
<text x="234.90" y="510.40" font-size="10.03" fill="#f4f4f4" font-weight="bold" textLength="18.10" lengthAdjust="spacingAndGlyphs" text-anchor="start" >EOS</text>
<text x="234.90" y="520.20" font-size="9.01" fill="#86a83a" textLength="29.50" lengthAdjust="spacingAndGlyphs" text-anchor="start" >000,000</text>
<path d="M266.40 519.8 L272.00 514.2 M268.20 514.2 H272.00 V518" stroke="#86a83a" stroke-width="0.9" fill="none"/>
<text x="342.70" y="510.40" font-size="10.03" fill="#f4f4f4" font-weight="bold" textLength="25.70" lengthAdjust="spacingAndGlyphs" text-anchor="start" >TRON</text>
<text x="342.70" y="520.20" font-size="9.01" fill="#c24a57" textLength="29.50" lengthAdjust="spacingAndGlyphs" text-anchor="start" >000,000</text>
<path d="M379.80 514.2 L374.20 519.8 M374.20 516 V519.8 H378.00" stroke="#c24a57" stroke-width="0.9" fill="none"/>
<text x="458.90" y="510.40" font-size="10.03" fill="#f4f4f4" font-weight="bold" textLength="31.60" lengthAdjust="spacingAndGlyphs" text-anchor="start" >VeChain</text>
<text x="458.90" y="520.20" font-size="9.01" fill="#86a83a" textLength="29.50" lengthAdjust="spacingAndGlyphs" text-anchor="start" >000,000</text>
<path d="M490.40 519.8 L496.00 514.2 M492.20 514.2 H496.00 V518" stroke="#86a83a" stroke-width="0.9" fill="none"/>
<text x="587.50" y="510.40" font-size="10.03" fill="#f4f4f4" font-weight="bold" textLength="40.50" lengthAdjust="spacingAndGlyphs" text-anchor="start" >OmiseGo</text>
<text x="587.50" y="520.20" font-size="9.01" fill="#c24a57" textLength="29.50" lengthAdjust="spacingAndGlyphs" text-anchor="start" >000,000</text>
<path d="M624.60 514.2 L619.00 519.8 M619.00 516 V519.8 H622.80" stroke="#c24a57" stroke-width="0.9" fill="none"/>
<text x="721.10" y="510.40" font-size="10.03" fill="#f4f4f4" font-weight="bold" textLength="18.40" lengthAdjust="spacingAndGlyphs" text-anchor="start" >Icon</text>
<text x="721.10" y="520.20" font-size="9.01" fill="#c24a57" textLength="29.50" lengthAdjust="spacingAndGlyphs" text-anchor="start" >000,000</text>
<path d="M758.20 514.2 L752.60 519.8 M752.60 516 V519.8 H756.40" stroke="#c24a57" stroke-width="0.9" fill="none"/>
<text x="829.20" y="510.40" font-size="10.03" fill="#f4f4f4" font-weight="bold" textLength="27.30" lengthAdjust="spacingAndGlyphs" text-anchor="start" >Golem</text>
<text x="829.20" y="520.20" font-size="9.01" fill="#86a83a" textLength="29.50" lengthAdjust="spacingAndGlyphs" text-anchor="start" >000,000</text>
<path d="M860.70 519.8 L866.30 514.2 M862.50 514.2 H866.30 V518" stroke="#86a83a" stroke-width="0.9" fill="none"/>
<text x="936.80" y="510.40" font-size="10.03" fill="#f4f4f4" font-weight="bold" textLength="18.40" lengthAdjust="spacingAndGlyphs" text-anchor="start" >Icon</text>
<text x="936.80" y="520.20" font-size="9.01" fill="#c24a57" textLength="29.50" lengthAdjust="spacingAndGlyphs" text-anchor="start" >000,000</text>
<path d="M973.90 514.2 L968.30 519.8 M968.30 516 V519.8 H972.10" stroke="#c24a57" stroke-width="0.9" fill="none"/>
</svg>
</body></html>
